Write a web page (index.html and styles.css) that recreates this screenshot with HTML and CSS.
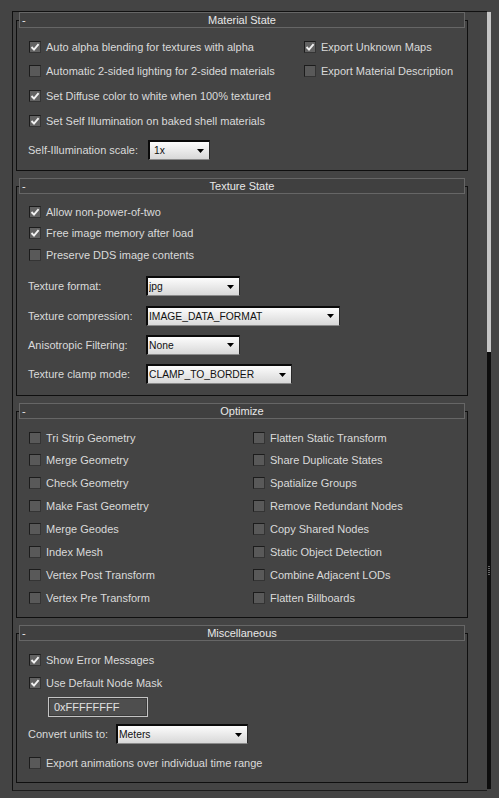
FILE: index.html
```html
<!DOCTYPE html>
<html>
<head>
<meta charset="utf-8">
<link rel="stylesheet" href="styles.css">
</head>
<body>
<div class="screen">
  <div class="panel">
    <section class="rollout">
      <div class="rl-head"><span class="rl-toggle">-</span><span class="rl-title">Material State</span><span></span></div>
      <div class="rl-body body-material">
        <div class="checks grid-material">
          <div class="chk c1"><span class="box on"><svg viewBox="0 0 10 10"><polyline points="1.5,5 4,7.6 8.6,2.2"/></svg></span><span>Auto alpha blending for textures with alpha</span></div>
          <div class="chk c2"><span class="box on"><svg viewBox="0 0 10 10"><polyline points="1.5,5 4,7.6 8.6,2.2"/></svg></span><span>Export Unknown Maps</span></div>
          <div class="chk c1"><span class="box"></span><span>Automatic 2-sided lighting for 2-sided materials</span></div>
          <div class="chk c2"><span class="box"></span><span>Export Material Description</span></div>
          <div class="chk c1"><span class="box on"><svg viewBox="0 0 10 10"><polyline points="1.5,5 4,7.6 8.6,2.2"/></svg></span><span>Set Diffuse color to white when 100% textured</span></div>
          <div class="chk c1"><span class="box on"><svg viewBox="0 0 10 10"><polyline points="1.5,5 4,7.6 8.6,2.2"/></svg></span><span>Set Self Illumination on baked shell materials</span></div>
        </div>
        <div class="field field-selfillum">
          <span class="field-label lbl-120">Self-Illumination scale:</span>
          <div class="dd w62"><span class="dd-value pad-wide">1x</span><svg class="dd-arrow" viewBox="0 0 7 4"><polygon points="0,0 7,0 3.5,4"/></svg></div>
        </div>
      </div>
    </section>

    <section class="rollout">
      <div class="rl-head"><span class="rl-toggle">-</span><span class="rl-title">Texture State</span><span></span></div>
      <div class="rl-body body-texture">
        <div class="checks grid-texture">
          <div class="chk"><span class="box on"><svg viewBox="0 0 10 10"><polyline points="1.5,5 4,7.6 8.6,2.2"/></svg></span><span>Allow non-power-of-two</span></div>
          <div class="chk"><span class="box on"><svg viewBox="0 0 10 10"><polyline points="1.5,5 4,7.6 8.6,2.2"/></svg></span><span>Free image memory after load</span></div>
          <div class="chk"><span class="box"></span><span>Preserve DDS image contents</span></div>
        </div>
        <div class="fields">
          <div class="field">
            <span class="field-label lbl-118">Texture format:</span>
            <div class="dd w94"><span class="dd-value">jpg</span><svg class="dd-arrow" viewBox="0 0 7 4"><polygon points="0,0 7,0 3.5,4"/></svg></div>
          </div>
          <div class="field">
            <span class="field-label lbl-118">Texture compression:</span>
            <div class="dd w194"><span class="dd-value">IMAGE_DATA_FORMAT</span><svg class="dd-arrow" viewBox="0 0 7 4"><polygon points="0,0 7,0 3.5,4"/></svg></div>
          </div>
          <div class="field">
            <span class="field-label lbl-118">Anisotropic Filtering:</span>
            <div class="dd w94"><span class="dd-value">None</span><svg class="dd-arrow" viewBox="0 0 7 4"><polygon points="0,0 7,0 3.5,4"/></svg></div>
          </div>
          <div class="field">
            <span class="field-label lbl-118">Texture clamp mode:</span>
            <div class="dd w146"><span class="dd-value">CLAMP_TO_BORDER</span><svg class="dd-arrow" viewBox="0 0 7 4"><polygon points="0,0 7,0 3.5,4"/></svg></div>
          </div>
        </div>
      </div>
    </section>

    <section class="rollout">
      <div class="rl-head"><span class="rl-toggle">-</span><span class="rl-title">Optimize</span><span></span></div>
      <div class="rl-body body-optimize">
        <div class="checks grid-optimize">
          <div class="chk"><span class="box"></span><span>Tri Strip Geometry</span></div>
          <div class="chk"><span class="box"></span><span>Flatten Static Transform</span></div>
          <div class="chk"><span class="box"></span><span>Merge Geometry</span></div>
          <div class="chk"><span class="box"></span><span>Share Duplicate States</span></div>
          <div class="chk"><span class="box"></span><span>Check Geometry</span></div>
          <div class="chk"><span class="box"></span><span>Spatialize Groups</span></div>
          <div class="chk"><span class="box"></span><span>Make Fast Geometry</span></div>
          <div class="chk"><span class="box"></span><span>Remove Redundant Nodes</span></div>
          <div class="chk"><span class="box"></span><span>Merge Geodes</span></div>
          <div class="chk"><span class="box"></span><span>Copy Shared Nodes</span></div>
          <div class="chk"><span class="box"></span><span>Index Mesh</span></div>
          <div class="chk"><span class="box"></span><span>Static Object Detection</span></div>
          <div class="chk"><span class="box"></span><span>Vertex Post Transform</span></div>
          <div class="chk"><span class="box"></span><span>Combine Adjacent LODs</span></div>
          <div class="chk"><span class="box"></span><span>Vertex Pre Transform</span></div>
          <div class="chk"><span class="box"></span><span>Flatten Billboards</span></div>
        </div>
      </div>
    </section>

    <section class="rollout">
      <div class="rl-head"><span class="rl-toggle">-</span><span class="rl-title">Miscellaneous</span><span></span></div>
      <div class="rl-body body-misc">
        <div class="chk"><span class="box on"><svg viewBox="0 0 10 10"><polyline points="1.5,5 4,7.6 8.6,2.2"/></svg></span><span>Show Error Messages</span></div>
        <div class="chk misc-second"><span class="box on"><svg viewBox="0 0 10 10"><polyline points="1.5,5 4,7.6 8.6,2.2"/></svg></span><span>Use Default Node Mask</span></div>
        <div class="textbox">0xFFFFFFFF</div>
        <div class="field misc-units">
          <span class="field-label lbl-88">Convert units to:</span>
          <div class="dd w132"><span class="dd-value">Meters</span><svg class="dd-arrow" viewBox="0 0 7 4"><polygon points="0,0 7,0 3.5,4"/></svg></div>
        </div>
        <div class="chk misc-last"><span class="box"></span><span>Export animations over individual time range</span></div>
      </div>
    </section>
  </div>
  <div class="scrollbar">
    <div class="sb-track"></div>
    <div class="sb-thumb"><span class="sb-grip"></span></div>
  </div>
</div>
</body>
</html>
```

FILE: styles.css
```css
* { box-sizing: border-box; }
html, body { margin: 0; padding: 0; }
body {
  background: #444444;
  width: 499px;
  height: 798px;
  overflow: hidden;
  font-family: "Liberation Sans", Arial, sans-serif;
  font-size: 11px;
  color: #dadada;
}
.screen {
  display: flex;
  padding: 11px 0 0 12px;
}
.panel {
  width: 475px;
  height: 780px;
  border-top: 1px solid #111;
  border-left: 1px solid #111;
  border-bottom: 1px solid #1c1c1c;
}
.scrollbar {
  width: 4px;
  margin-top: 1px;
  height: 777px;
  display: flex;
  flex-direction: column;
}
.sb-track { height: 340px; background: #c6c6c6; }
.sb-thumb {
  flex: 1;
  background: #0e0e0e;
  display: flex;
  align-items: center;
  justify-content: center;
}
.sb-grip {
  width: 2px;
  height: 10px;
  background: repeating-linear-gradient(#6a6a6a 0 1px, transparent 1px 2px);
}

.rollout + .rollout { margin-top: 7px; }
.rl-head {
  position: relative;
  z-index: 1;
  margin-left: 6px;
  width: 446px;
  height: 16px;
  border: 1px solid #666;
  background: #404040;
  display: grid;
  grid-template-columns: 20px 1fr 20px;
  align-items: center;
  line-height: 14px;
  color: #e8e8e8;
}
.rl-toggle { padding-left: 2px; }
.rl-title { text-align: center; }
.rl-body {
  margin-top: -8px;
  margin-left: 3px;
  width: 452px;
  border: 1px solid #0f0f0f;
  padding-left: 12px;
}
.body-material { height: 151px; padding-top: 17.5px; }
.body-texture { height: 210px; padding-top: 17.2px; }
.body-optimize { height: 207px; padding-top: 17.5px; }
.body-misc { height: 150px; padding-top: 18px; }

.checks { display: grid; grid-auto-rows: 16px; }
.grid-material { grid-template-columns: 275px 1fr; row-gap: 8.8px; }
.grid-material .c1 { grid-column: 1; }
.grid-material .c2 { grid-column: 2; }
.grid-texture { row-gap: 5.3px; }
.grid-optimize { grid-template-columns: 224px 1fr; row-gap: 6.9px; }

.chk {
  display: flex;
  align-items: center;
  height: 16px;
  line-height: 16px;
  white-space: nowrap;
}
.box {
  flex: none;
  width: 12px;
  height: 12px;
  margin-right: 5px;
  border: 1px solid;
  border-color: #1c1c1c #343434 #343434 #1c1c1c;
  background: #595959;
  display: flex;
  align-items: center;
  justify-content: center;
}
.box svg { width: 10px; height: 10px; display: block; }
.box svg polyline { fill: none; stroke: #f2f2f2; stroke-width: 1.9; }
.box.on { background: #626262; }

.field {
  display: flex;
  align-items: center;
  height: 20px;
  margin-left: -1px;
}
.field-selfillum { margin-top: 11.2px; }
.field-label { flex: none; white-space: nowrap; }
.lbl-120 { width: 120px; }
.lbl-118 { width: 118px; }
.lbl-88 { width: 88px; }
.fields {
  display: grid;
  row-gap: 9.3px;
  margin-top: 13.5px;
}
.dd {
  height: 20px;
  display: flex;
  align-items: center;
  border-style: solid;
  border-width: 2px 1px 1px 2px;
  border-color: #0a0a0a #2a2a2a #8a8a8a #0a0a0a;
  background: linear-gradient(#fcfcfc, #d8d8d8);
  color: #111;
  padding: 0 5px 0 1px;
  font-size: 10.3px;
}
.dd-value { flex: 1; white-space: nowrap; overflow: hidden; line-height: 17px; }
.dd-value.pad-wide { padding-left: 3px; }
.dd-arrow { width: 7px; height: 4px; flex: none; display: block; }
.dd-arrow polygon { fill: #000; }
.w62 { width: 62px; }
.w94 { width: 94px; }
.w194 { width: 194px; }
.w146 { width: 146px; }
.w132 { width: 132px; }

.misc-second { margin-top: 6.8px; }
.textbox {
  margin-top: 5.9px;
  margin-left: 19px;
  width: 100px;
  height: 20px;
  border: 1px solid #c4c4c4;
  box-shadow: inset 0 0 0 1px #3a3a3a;
  background: #4e4e4e;
  padding-left: 5px;
  line-height: 18px;
  color: #e2e2e2;
}
.misc-units { margin-top: 7.6px; }
.misc-last { margin-top: 10.5px; }
```
